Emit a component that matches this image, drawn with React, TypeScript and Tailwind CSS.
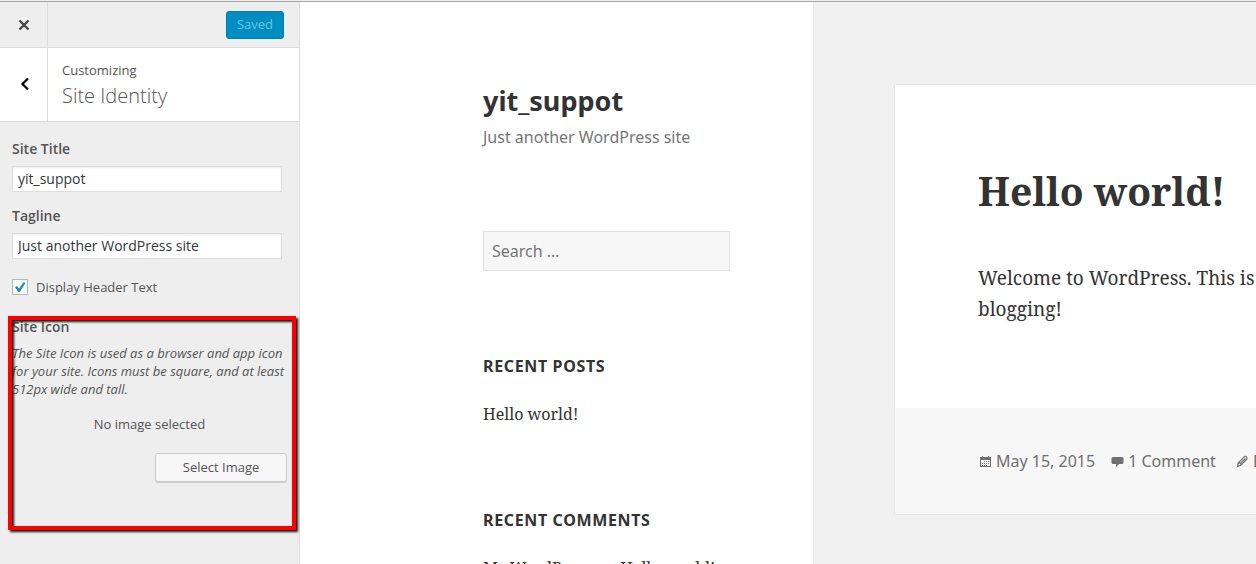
import { ReactNode } from 'react'

interface TextFieldProps {
  id: string
  label: string
  value: string
}

const TextField = ({ id, label, value }: TextFieldProps) => {
  return (
    <div className="mb-3">
      <label htmlFor={id} className="block mb-[5px] text-sm leading-6 font-semibold text-[#555]">{label}</label>
      <input
        id={id}
        type="text"
        defaultValue={value}
        className="block w-full h-[26px] px-[5px] pb-[2px] bg-white border border-[#ddd] text-sm text-[#32373c] shadow-[inset_0_1px_2px_rgba(0,0,0,0.07)] outline-none"
      />
    </div>
  )
}

const CustomizerPanel = () => {
  return (
    <aside className="relative w-[300px] shrink-0 bg-[#eee] border-r border-[#ddd] font-['Open_Sans',sans-serif] text-[13px] text-[#555]">
      <div className="flex items-center justify-between h-[46px] pr-[15px] border-b border-[#ddd]">
        <button type="button" aria-label="Close" className="flex items-center justify-center w-12 h-full border-r border-[#ddd]">
          <svg width="12" height="12" viewBox="0 0 12 12" fill="none" stroke="#444" strokeWidth="2.4">
            <path d="M1.5 1.500l9 9M10.500 1.500l-9 9" />
          </svg>
        </button>
        <button type="button" className="h-7 px-[10px] bg-[#008ec2] border border-[#007cb2] rounded-[3px] text-[#66c6e4]">Saved</button>
      </div>

      <div className="flex h-[74px] bg-white border-b border-[#ddd]">
        <button type="button" aria-label="Back" className="flex items-center justify-center w-12 pb-[2px] border-r border-[#ddd]">
          <svg width="10" height="14" viewBox="0 0 10 14" fill="none" stroke="#000" strokeWidth="2.2">
            <path d="M9 1.500L3.500 7l5.500 5.500" />
          </svg>
        </button>
        <div className="pt-3 pl-[14px]">
          <span className="block leading-5">Customizing</span>
          <h1 className="text-xl leading-8 font-light">Site Identity</h1>
        </div>
      </div>

      <form className="pt-[15px] pl-3 pr-[17px]">
        <TextField id="site-title" label="Site Title" value="yit_suppot" />
        <TextField id="tagline" label="Tagline" value="Just another WordPress site" />

        <label className="flex items-center gap-2 mt-5 h-4 leading-[18px]">
          <span className="grid w-4 h-4">
            <input
              type="checkbox"
              defaultChecked
              className="peer col-start-1 row-start-1 appearance-none w-4 h-4 bg-white border border-[#b4b9be]"
            />
            <svg viewBox="0 0 16 16" fill="#1e8cbe" className="col-start-1 row-start-1 w-4 h-4 pointer-events-none invisible peer-checked:visible">
              <path d="M3 8.300l2-1.300 2 2.500L11.500 3.300l2 .7L7.800 13H6.300z" />
            </svg>
          </span>
          Display Header Text
        </label>

        <h2 className="mt-5 mb-[5px] text-sm leading-6 font-semibold">Site Icon</h2>
        <p className="w-[275px] leading-[18px] italic">
          The Site Icon is used as a browser and app icon for your site. Icons must be square, and at least 512px wide and tall.
        </p>
        <p className="mt-[17px] mb-5 w-[275px] text-center leading-[18px]">No image selected</p>
        <div className="flex justify-end w-[275px]">
          <button type="button" className="w-[132px] h-[29px] bg-[#f7f7f7] border border-[#ccc] rounded-[3px] shadow-[0_1px_0_#ccc]">Select Image</button>
        </div>
      </form>

      {/* highlight over the site icon control */}
      <div className="absolute left-2 top-[314px] w-[288px] h-[214px] border-4 border-[#f00] drop-shadow-[2px_2px_1px_rgba(0,0,0,0.9)] pointer-events-none" />
    </aside>
  )
}

interface WidgetProps {
  title: string
  children: ReactNode
}

const Widget = ({ title, children }: WidgetProps) => {
  return (
    <section className="mb-[82px]">
      <h2 className="mb-6 text-base leading-6 font-bold uppercase tracking-[0.04em]">{title}</h2>
      <div className="font-['Noto_Serif','DejaVu_Serif',serif] text-base leading-6 whitespace-nowrap">{children}</div>
    </section>
  )
}

const SiteSidebar = () => {
  return (
    <div className="min-w-0 pt-[81px] pl-[183px] pr-[83px] bg-white border-r border-[#e7e7e7]">
      <p className="text-[27px] leading-9 font-bold">yit_suppot</p>
      <p className="mt-[6px] text-base leading-6 text-[#757575] whitespace-nowrap">Just another WordPress site</p>
      <input
        type="search"
        aria-label="Search"
        placeholder="Search …"
        className="block w-full h-10 mt-[82px] mb-[83px] px-2 bg-[#f7f7f7] border border-[#e2e2e2] text-base placeholder:text-[#757575] outline-none"
      />
      <Widget title="Recent Posts"><a href="#">Hello world!</a></Widget>
      <Widget title="Recent Comments"><a href="#">Mr WordPress</a> on <a href="#">Hello world!</a></Widget>
    </div>
  )
}

const CalendarIcon = () => (
  <svg width="13" height="13" viewBox="0 0 13 13" fill="#707070">
    <path fillRule="evenodd" d="M1 2h2V1h1v1h5V1h1v1h2v10H1zM2 5v6h9V5z" />
    <path d="M5 6h1v1H5zM7 6h1v1H7zM9 6h1v1H9zM3 8h1v1H3zM5 8h1v1H5zM7 8h1v1H7zM9 8h1v1H9zM3 10h1v1H3zM5 10h1v1H5zM7 10h1v1H7z" />
  </svg>
)

const CommentIcon = () => (
  <svg width="13" height="13" viewBox="0 0 13 13" fill="#707070">
    <path d="M2 2h9q1.500 0 1.500 1.500v4Q12.500 9 11 9H8l-3 3V9H2Q.5 9 .5 7.500v-4Q.5 2 2 2z" />
  </svg>
)

const PencilIcon = () => (
  <svg width="13" height="13" viewBox="0 0 13 13" fill="none" stroke="#707070" strokeWidth="1.200">
    <path d="M1.500 11.500l.8-3.600 6-6q1-1 2.200.2t.2 2.200l-6 6zM3 7.500L5.500 10M4.500 8.500l5-5" />
  </svg>
)

const Post = () => {
  return (
    <article className="bg-white shadow-[0_0_1px_rgba(0,0,0,0.25)]">
      <div className="h-[323px] pl-[83px] pt-[82px] font-['Noto_Serif','DejaVu_Serif',serif] whitespace-nowrap">
        <h1 className="text-[39px] leading-[48px] font-bold">Hello world!</h1>
        <p className="mt-12 text-[19px] leading-[31px]">
          Welcome to WordPress. This is<br />
          blogging!
        </p>
      </div>
      <footer className="flex items-center gap-4 h-[106px] pl-[84px] bg-[#f7f7f7] text-base text-[#707070] whitespace-nowrap">
        <a href="#" className="flex shrink-0 items-center gap-1"><CalendarIcon />May 15, 2015</a>
        <a href="#" className="flex shrink-0 items-center gap-1"><CommentIcon />1 Comment</a>
        <a href="#" className="flex shrink-0 items-center gap-1 ml-1"><PencilIcon />Edit</a>
      </footer>
    </article>
  )
}

const App = () => {
  return (
    <div className="flex flex-col h-screen overflow-hidden">
      <div className="h-[2px] shrink-0 bg-[#eee] border-b border-[#a5a5a5]" />
      <div className="flex flex-1 min-h-0">
        <CustomizerPanel />
        <div className="grid grid-cols-[514fr_442fr] flex-1 min-w-0 overflow-hidden bg-[#f1f1f1] font-['Noto_Sans',sans-serif] text-[#333]">
          <SiteSidebar />
          <main className="min-w-0 pt-[83px] pl-[81px] overflow-hidden">
            <Post />
          </main>
        </div>
      </div>
    </div>
  )
}

export default App
